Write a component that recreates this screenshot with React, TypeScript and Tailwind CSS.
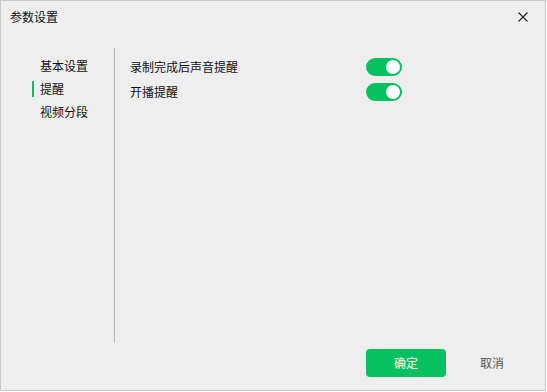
import { useState } from 'react'

const menuItems = ['基本设置', '提醒', '视频分段']

function Toggle({ on, onChange }: { on: boolean; onChange: () => void }) {
  return (
    <button
      onClick={onChange}
      className={`w-[36px] h-[18px] rounded-full flex items-center px-[2px] ${
        on ? 'bg-[#07c160] justify-end' : 'bg-[#c9c9c9] justify-start'
      }`}
    >
      <span className="w-[14px] h-[14px] rounded-full bg-white" />
    </button>
  )
}

export default function App() {
  const [active, setActive] = useState(1)
  const [soundOn, setSoundOn] = useState(true)
  const [liveOn, setLiveOn] = useState(true)

  return (
    <div className="w-[547px] h-[392px] bg-white">
      <div
        className="w-[546px] h-[391px] bg-[#eeeeee] border border-[#c8c8c8] flex flex-col text-[12px] text-[#111]"
        style={{ fontFamily: '"Noto Sans CJK SC", "Noto Sans", sans-serif' }}
      >
        {/* Header */}
        <div className="h-[31px] flex items-center justify-between pl-[9px] pr-[17px]">
          <span>参数设置</span>
          <svg className="w-[10px] h-[10px]" viewBox="0 0 10 10" fill="none" stroke="#222" strokeWidth={1.1}>
            <path d="M0.5 0.5l9 9M9.5 0.5l-9 9" />
          </svg>
        </div>

        {/* Body */}
        <div className="flex mt-[16px] h-[295px]">
          <div className="w-[113px] pt-[6px]">
            {menuItems.map((item, i) => (
              <div
                key={item}
                onClick={() => setActive(i)}
                className="h-[23px] flex items-center pl-[31px] gap-[6px] cursor-pointer"
              >
                <span className={`w-[2px] h-[16px] ${i === active ? 'bg-[#07c160]' : 'bg-transparent'}`} />
                <span>{item}</span>
              </div>
            ))}
          </div>
          <div className="w-px bg-[#b4b4b4]" />
          <div className="pl-[15px] pt-[6px]">
            <div className="w-[272px] h-[25px] flex items-center justify-between">
              <span>录制完成后声音提醒</span>
              <Toggle on={soundOn} onChange={() => setSoundOn(!soundOn)} />
            </div>
            <div className="w-[272px] h-[25px] flex items-center justify-between">
              <span>开播提醒</span>
              <Toggle on={liveOn} onChange={() => setLiveOn(!liveOn)} />
            </div>
          </div>
        </div>

        {/* Footer */}
        <div className="flex justify-end items-start pt-[6px] pr-[13px] gap-[6px]">
          <button className="w-[80px] h-[28px] rounded-[4px] bg-[#07c160] text-white">确定</button>
          <button className="w-[80px] h-[28px] text-[#555]">取消</button>
        </div>
      </div>
    </div>
  )
}
